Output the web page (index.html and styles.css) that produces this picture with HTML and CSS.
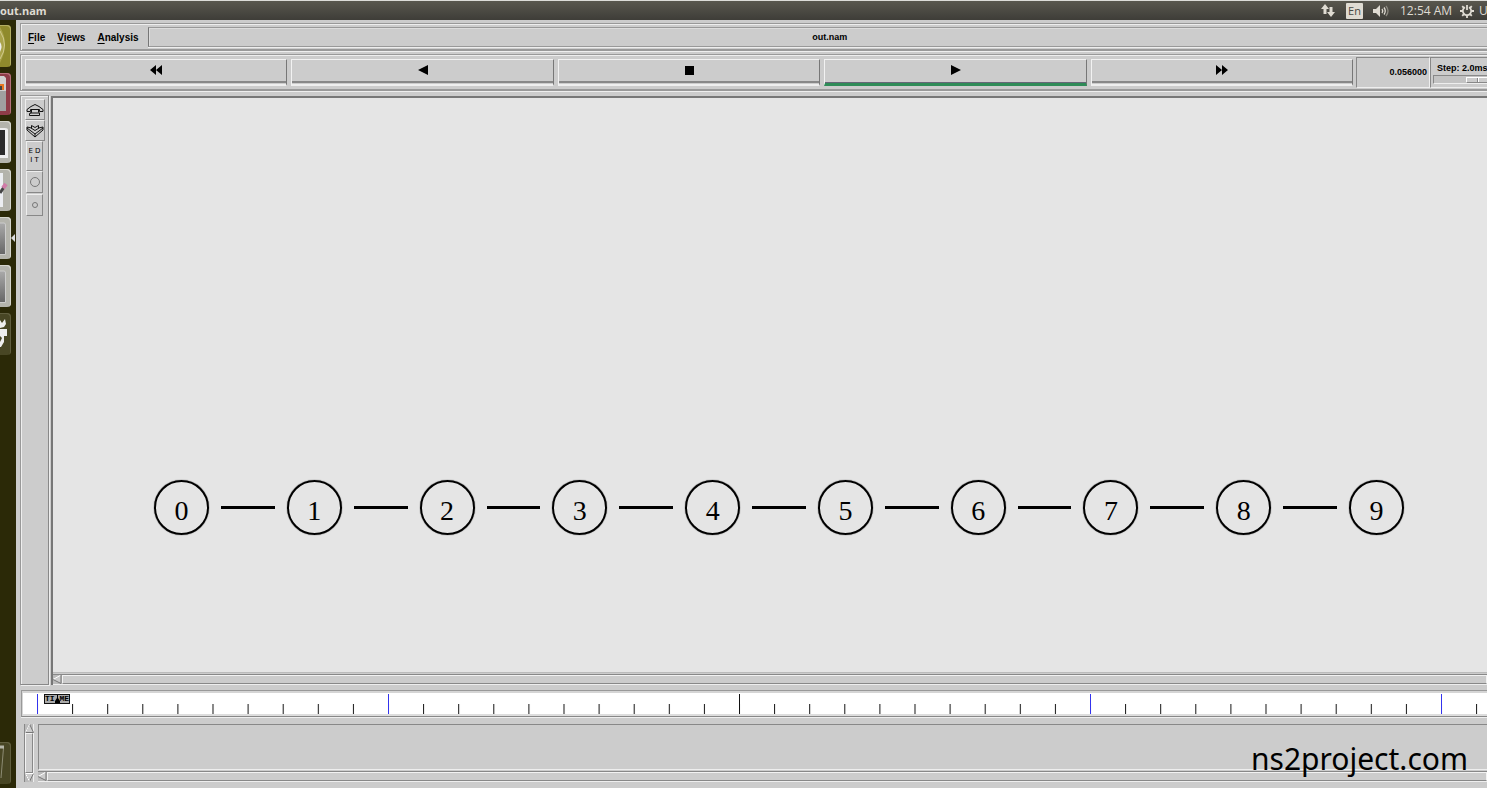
FILE: index.html
```html
<!DOCTYPE html>
<html lang="en">
<head>
<meta charset="utf-8">
<title>out.nam</title>
<link rel="stylesheet" href="styles.css">
</head>
<body>
<header class="topbar">
  <span class="topbar-title">out.nam</span>
  <div class="indicators">
    <svg class="ind-net" width="14" height="14" viewBox="0 0 14 14"><path d="M4 0 8 5H5.500V10H2.500V5H0ZM10 13 6 8H8.500V3H11.500V8H14Z" fill="#dfdbd2"/></svg>
    <span class="lang">En</span>
    <svg class="ind-vol" width="17" height="14" viewBox="0 0 17 14"><path d="M0 5H3L7 1V13L3 9H0Z" fill="#dfdbd2"/><path d="M9 5Q10.500 7 9 9M11 3.500Q13.500 7 11 10.500" fill="none" stroke="#dfdbd2" stroke-width="1.300"/><path d="M13 2Q17 7 13 12" fill="none" stroke="#8b887f" stroke-width="1.300"/></svg>
    <span class="clock">12:54 AM</span>
    <svg class="ind-gear" width="14" height="14" viewBox="0 0 14 14"><g fill="none" stroke="#dfdbd2"><path d="M5 3.300A4.200 4.200 0 1 0 9 3.300" stroke-width="1.800"/><path d="M7 1V6M0 7H3M11 7H14M7 11V14M2.200 2.200 4 4M11.800 2.200 10 4M2.200 11.800 4 10M11.800 11.800 10 10" stroke-width="1.800"/></g></svg>
    <span class="user">U</span>
  </div>
</header>
<div class="desktop">
  <nav class="launcher" aria-label="Launcher">
    <button class="tile tile-olive" aria-label="Dash"><svg width="11" height="42" viewBox="0 0 11 42"><path d="M0 2Q10 18 0 38" fill="#b5ae58" opacity=".7"/><path d="M0 6Q9 20 0 34" fill="none" stroke="#d0ca8c"/><path d="M0 17Q3 21 0 27Z" fill="#eee"/></svg></button>
    <button class="tile tile-red" aria-label="Files"><svg width="11" height="42" viewBox="0 0 11 42"><path d="M0 3H4L6 5V38H0Z" fill="#d0d0d0"/><path d="M0 11H4V17H0Z" fill="#e87722"/><path d="M0 13H2V17H0Z" fill="#444"/><path d="M0 18H6V38H0Z" fill="#a0a0a0"/></svg></button>
    <button class="tile tile-light" aria-label="Terminal"><svg width="11" height="42" viewBox="0 0 11 42"><path d="M0 7H5Q8 7 8 9V37H0Z" fill="#eee"/><path d="M0 9H5V34H0Z" fill="#2a2a2a"/></svg></button>
    <button class="tile tile-light" aria-label="Text editor"><svg width="11" height="42" viewBox="0 0 11 42"><path d="M0 4H3V38H0Z" fill="#eceef2"/><path d="M0 24 4 18" stroke="#444" stroke-width="3"/><path d="M3 19 6 15" stroke="#d07ba8" stroke-width="4"/></svg></button>
    <button class="tile tile-light running" aria-label="nam"><svg width="11" height="42" viewBox="0 0 11 42"><defs><linearGradient id="grey" x2="0" y2="1"><stop stop-color="#aaa"/><stop offset="1" stop-color="#666"/></linearGradient></defs><path d="M-1 6H4Q5.500 6 5.500 8V37.500H-1Z" fill="url(#grey)" stroke="#ccc"/></svg></button>
    <button class="tile tile-light" aria-label="nam console"><svg width="11" height="42" viewBox="0 0 11 42"><path d="M-1 6H4Q5.500 6 5.500 8V37.500H-1Z" fill="url(#grey)" stroke="#ccc"/></svg></button>
    <button class="tile tile-dark" aria-label="Tool"><svg width="11" height="42" viewBox="0 0 11 42"><path d="M0 7 2 10 5 6 6 11 4 14 0 15ZM0 16H7V23H4V29L1 34H0V29L2 25 0 23Z" fill="#eee"/></svg></button>
    <button class="tile tile-dark tile-last" aria-label="Trash"><svg width="11" height="42" viewBox="0 0 11 42"><path d="M0 5 3.500 6 1 36" fill="none" stroke="#8c8b74" stroke-width="1"/><path d="M0 5H4" stroke="#b5b5a8" stroke-width="3"/></svg></button>
  </nav>
  <main class="window">
    <section class="menubar panel">
      <button class="menu"><u>F</u>ile</button>
      <button class="menu"><u>V</u>iews</button>
      <button class="menu"><u>A</u>nalysis</button>
      <div class="filename">out.nam</div>
    </section>
    <section class="toolbar panel">
      <div class="playback">
        <button class="play" aria-label="Rewind"><svg width="14" height="10" viewBox="0 0 14 10"><path d="M7 0V10L1 5ZM13 0V10L7 5Z"/></svg></button>
        <button class="play" aria-label="Play backward"><svg width="14" height="10" viewBox="0 0 14 10"><path d="M12 0V10L2 5Z"/></svg></button>
        <button class="play" aria-label="Stop"><svg width="14" height="10" viewBox="0 0 14 10"><path d="M3 1H12V10H3Z"/></svg></button>
        <button class="play active" aria-label="Play forward"><svg width="14" height="10" viewBox="0 0 14 10"><path d="M3 0V10L13 5Z"/></svg></button>
        <button class="play" aria-label="Fast forward"><svg width="14" height="10" viewBox="0 0 14 10"><path d="M1 0V10L7 5ZM7 0V10L13 5Z"/></svg></button>
      </div>
      <output class="time">0.056000</output>
      <div class="step">
        <label for="step">Step: 2.0ms</label>
        <input id="step" type="range" min="0" max="100" value="50">
      </div>
    </section>
    <section class="workspace">
      <aside class="tools panel">
        <button class="tool big" aria-label="Zoom in"><svg width="18" height="14" viewBox="0 0 18 14"><path d="M9 1.500 5 3.500 1 6.500V8.500H4.500V6.500H13.500V8.500H17V6.500L13 3.500ZM5.500 6.500V9.500L3.500 10.500V12.500H13.500V9.500M12.500 6.500V9.500M4 10H13" fill="none" stroke="#111"/></svg></button>
        <button class="tool big" aria-label="Zoom out"><svg width="18" height="14" viewBox="0 0 18 14"><path d="M5.500 1.500V4L1 3V6L9 13 17 6V3L12.500 4V1.500L9 3.500ZM1 4 9 10 17 4M9 10V13M5 4 9 6.500 13 4" fill="none" stroke="#111"/></svg></button>
        <button class="tool edit"><span>E D</span><span>I T</span></button>
        <button class="tool round" aria-label="Larger nodes"><svg width="12" height="12" viewBox="0 0 12 12"><circle cx="6" cy="6" r="4.500" fill="none" stroke="#777"/></svg></button>
        <button class="tool round" aria-label="Smaller nodes"><svg width="12" height="12" viewBox="0 0 12 12"><circle cx="6" cy="6" r="2.500" fill="none" stroke="#777"/></svg></button>
      </aside>
      <div class="view">
        <div class="canvas">
          <div class="network">
            <div class="node">0</div><div class="link"></div>
            <div class="node">1</div><div class="link"></div>
            <div class="node">2</div><div class="link"></div>
            <div class="node">3</div><div class="link"></div>
            <div class="node">4</div><div class="link"></div>
            <div class="node">5</div><div class="link"></div>
            <div class="node">6</div><div class="link"></div>
            <div class="node">7</div><div class="link"></div>
            <div class="node">8</div><div class="link"></div>
            <div class="node">9</div>
          </div>
        </div>
        <div class="hscroll"><button class="arrow" aria-label="Scroll left"><svg width="9" height="9" viewBox="0 0 9 9"><path d="M8 0V8.500L0 4.500Z" fill="#ccc"/><path d="M8 0 0 4.500" stroke="#fff"/><path d="M0 4.500 8 8.500V0" fill="none" stroke="#777"/></svg></button><div class="thumb"></div></div>
      </div>
    </section>
    <section class="timeline">
      <svg class="ticks" width="100%" height="20" aria-hidden="true">
        <defs>
          <pattern id="minor" x="13" width="35.100" height="20" patternUnits="userSpaceOnUse"><path d="M.5 10V20" stroke="#111"/></pattern>
          <pattern id="major" x="13" width="1404" height="20" patternUnits="userSpaceOnUse"><path d="M.5 0V20M351.500 0V20M1053.500 0V20" stroke="#33e"/><path d="M702.500 0V20" stroke="#111"/></pattern>
        </defs>
        <rect width="100%" height="20" fill="url(#minor)"/>
        <rect width="100%" height="20" fill="url(#major)"/>
      </svg>
      <div class="marker">TI<svg width="5" height="8" viewBox="0 0 5 8"><path d="M2 0H3V3L5 6V8H0V6L2 3Z"/></svg>ME</div>
    </section>
    <section class="console">
      <div class="vscroll">
        <button class="arrow" aria-label="Scroll up"><svg width="9" height="9" viewBox="0 0 9 9"><path d="M4.500 0 8.500 8.500H.5Z" fill="#ccc" stroke="#777"/><path d="M4.500 0 .5 8.500" stroke="#fff"/></svg></button>
        <div class="thumb"></div>
        <button class="arrow" aria-label="Scroll down"><svg width="9" height="9" viewBox="0 0 9 9"><path d="M.5 .5H8.500L4.500 8.500Z" fill="#ccc" stroke="#777"/><path d="M4.500 8.500 .5 .5H8.500" fill="none" stroke="#fff"/></svg></button>
      </div>
      <div class="console-main">
        <div class="pane"><span class="watermark">ns2project.com</span></div>
        <div class="hscroll"><button class="arrow" aria-label="Scroll left"><svg width="9" height="9" viewBox="0 0 9 9"><path d="M8 0V8.500L0 4.500Z" fill="#ccc"/><path d="M8 0 0 4.500" stroke="#fff"/><path d="M0 4.500 8 8.500V0" fill="none" stroke="#777"/></svg></button><div class="thumb"></div></div>
      </div>
    </section>
  </main>
</div>
</body>
</html>
```
FILE: styles.css
```css
* { box-sizing: border-box; }

body {
  margin: 0;
  height: 100vh;
  display: flex;
  flex-direction: column;
  overflow: hidden;
  background: #ccc;
  color: #000;
  font-family: "Liberation Sans", Arial, sans-serif;
}

button {
  margin: 0;
  padding: 0;
  border: 0;
  background: none;
  color: inherit;
  font: inherit;
}

svg { display: block; flex: none; }

.topbar {
  flex: none;
  height: 20px;
  display: flex;
  align-items: center;
  justify-content: space-between;
  border-top: 1px solid #dcdcd8;
  background: linear-gradient(#59574e, #3e3d38);
  color: #dfdbd2;
  font-family: "Open Sans", "Noto Sans", sans-serif;
  font-size: 12px;
  line-height: 18px;
  white-space: nowrap;
}
.topbar-title { font-weight: 700; font-size: 11px; }
.indicators { display: flex; align-items: center; }
.lang {
  width: 17px;
  height: 16px;
  margin: 0 10px 0 11px;
  border-radius: 1px;
  background: #dfdbd2;
  color: #4a4942;
  font-size: 11px;
  line-height: 16px;
  text-align: center;
}
.clock { width: 50px; margin: 0 10px; }
.user { width: 8px; margin-left: 5px; overflow: hidden; }

.desktop { flex: 1; min-height: 0; display: flex; }

.launcher {
  flex: none;
  width: 16px;
  padding: 5px 0 4px;
  display: flex;
  flex-direction: column;
  gap: 6px;
  background: #2b2907;
}
.tile {
  position: relative;
  width: 11px;
  height: 42px;
  flex: none;
  border-radius: 0 4px 4px 0;
}
.tile-olive { background: #8f8a2c; box-shadow: inset -1px 1px #b3ae63; }
.tile-red { background: #8e3c48; box-shadow: inset -1px 1px #b6707b; }
.tile-light { background: #b4b4ac; box-shadow: inset -1px 1px #d5d5cd; }
.tile-dark { background: #484624; box-shadow: inset -1px 1px #605e3e; }
.tile-last { margin-top: auto; }
.running::after {
  content: "";
  position: absolute;
  left: 11px;
  top: 17px;
  border: solid transparent;
  border-width: 4px 4px 4px 0;
  border-right-color: #ddd;
}

.window {
  flex: 1;
  min-width: 0;
  padding: 3px 0 6px 4px;
  display: flex;
  flex-direction: column;
  background: #ccc;
}

.panel {
  border: 1px solid #999;
  box-shadow: inset 1px 1px #eee, inset 0 -1px #999, 0 1px #eee;
}
.menubar.panel, .toolbar.panel { border-right: 0; }

.menubar {
  flex: none;
  height: 28px;
  padding: 3px 0 3px 7px;
  display: flex;
  align-items: stretch;
  font-size: 10px;
  font-weight: 700;
}
.menu { margin-right: 12px; }
.menu u { text-underline-offset: 2px; }
.filename {
  flex: 1;
  margin-left: -3px;
  padding-left: 24px;
  border: 1px solid #999;
  border-left-color: #777;
  border-right: 0;
  box-shadow: inset 1px 1px #ddd, 0 1px #eee;
  font-size: 9px;
  font-weight: 700;
  line-height: 18px;
  text-align: center;
}

.toolbar {
  flex: none;
  height: 37px;
  margin-top: 3px;
  padding: 2px 0 2px 4px;
  display: flex;
}
.playback { flex: 1; display: flex; gap: 4px; padding: 2px 3px 2px 0; }
.play {
  flex: 1;
  height: 27px;
  padding-bottom: 4px;
  display: flex;
  align-items: center;
  justify-content: center;
  border: 1px solid #f2f2f2;
  border-right-color: #777;
  border-bottom: 2px solid #eee;
  box-shadow: inset 0 -1px #ccc, inset 0 -3px #888;
}
.play.active { padding-bottom: 3px; border-bottom: 3px solid #2e8b57; box-shadow: inset 0 -1px #667; }
.time {
  width: 74px;
  padding-right: 2px;
  border: 1px solid #888;
  border-right-color: #eee;
  border-bottom-color: #eee;
  font-size: 9px;
  font-weight: 700;
  line-height: 28px;
  text-align: right;
}
.step {
  width: 57px;
  padding: 5px 0 0 2px;
  border: 1px solid #888;
  border-right: 0;
  border-bottom-color: #eee;
  overflow: hidden;
  font-size: 9px;
  font-weight: 700;
  line-height: 10px;
  white-space: nowrap;
}
.step label { display: block; padding-left: 4px; }
.step input {
  appearance: none;
  display: block;
  width: 96px;
  height: 9px;
  margin: 2px 0 0;
  border: 1px solid #888;
  border-bottom-color: #eee;
  background: #c3c3c3;
}
.step input::-webkit-slider-thumb {
  appearance: none;
  width: 30px;
  height: 6px;
  border: 1px solid #fff;
  border-bottom-color: #888;
  background: linear-gradient(90deg, #ccc 10px, #888 10px, #888 11px, #fff 11px, #fff 12px, #ccc 12px);
}

.workspace { flex: 1; min-height: 0; margin-top: 4px; display: flex; gap: 2px; }
.tools {
  width: 29px;
  padding: 3px 0 0 4px;
  display: flex;
  flex-direction: column;
  align-items: flex-start;
}
.tools.panel { border-right-color: #888; border-bottom-color: #888; box-shadow: inset 1px 1px #eee, 1px 1px #eee; }
.tool {
  width: 17px;
  height: 22px;
  display: flex;
  align-items: center;
  justify-content: center;
  border: 1px solid #eee;
  border-right-color: #888;
  border-bottom-color: #888;
}
.tool.big { width: 20px; height: 21px; }
.tool.edit {
  height: 30px;
  flex-direction: column;
  font-family: "DejaVu Sans", sans-serif;
  font-size: 7px;
  line-height: 9px;
  white-space: nowrap;
}
.tool.edit, .tool.round { margin-left: 1px; }
.tool.round + .tool.round { margin-top: 1px; }

.view {
  flex: 1;
  min-width: 0;
  margin-top: 1px;
  display: flex;
  flex-direction: column;
  border: solid #777;
  border-width: 2px 0 0 2px;
}
.canvas {
  flex: 1;
  min-height: 0;
  display: flex;
  flex-direction: column;
  background: #e5e5e5;
  border-bottom: 1px solid #bbb;
}
.canvas::before { content: ""; flex: 382; }
.canvas::after { content: ""; flex: 137; }
.network {
  padding: 0 83px 0 101px;
  display: flex;
  align-items: center;
}
.node {
  flex: none;
  width: 55px;
  height: 55px;
  padding-top: 5px;
  border: 2px solid #000;
  border-radius: 50%;
  box-shadow: 0 0 1px #000;
  font-family: "Liberation Serif", "Times New Roman", serif;
  font-size: 28px;
  line-height: 48px;
  text-align: center;
}
.link { flex: 1; height: 3px; margin: 0 12px; background: #000; }

.hscroll {
  flex: none;
  height: 11px;
  margin-top: 1px;
  display: flex;
  border-top: 1px solid #888;
  border-bottom: 1px solid #eee;
  background: #bbb;
}
.arrow { flex: none; width: 9px; height: 9px; }
.thumb {
  flex: 1;
  border: 1px solid #f2f2f2;
  border-bottom-color: #888;
  background: #ccc;
}

.timeline {
  flex: none;
  position: relative;
  height: 27px;
  margin: 5px 0 0 1px;
  padding: 3px 0 2px 2px;
  border: 1px solid #999;
  border-right: 0;
  border-bottom-color: #888;
  background: #fff;
  box-shadow: inset 1px 2px #d5d5d5, inset 0 -2px #ddd, 0 1px #eee;
}
.marker {
  position: absolute;
  left: 22px;
  top: 3px;
  width: 26px;
  height: 10px;
  display: flex;
  align-items: center;
  justify-content: center;
  border: 1px solid #111;
  background: #aaa;
  font-family: "Liberation Mono", monospace;
  font-size: 8px;
  font-weight: 700;
  line-height: 8px;
}

.console { flex: none; height: 58px; margin: 7px 0 0 4px; display: flex; gap: 4px; }
.vscroll {
  width: 10px;
  display: flex;
  flex-direction: column;
  border-left: 1px solid #888;
  border-right: 1px solid #eee;
  background: #bbb;
}
.vscroll .thumb { border-right-color: #888; }
.console-main { flex: 1; min-width: 0; display: flex; flex-direction: column; }
.pane {
  flex: 1;
  min-height: 0;
  padding-right: 19px;
  display: flex;
  justify-content: flex-end;
  border: 1px solid #888;
  border-right: 0;
  border-bottom-color: #eee;
}
.watermark {
  position: relative;
  z-index: 1;
  padding-top: 14px;
  font-family: "Noto Sans", sans-serif;
  font-size: 30px;
  line-height: 40px;
}
```
